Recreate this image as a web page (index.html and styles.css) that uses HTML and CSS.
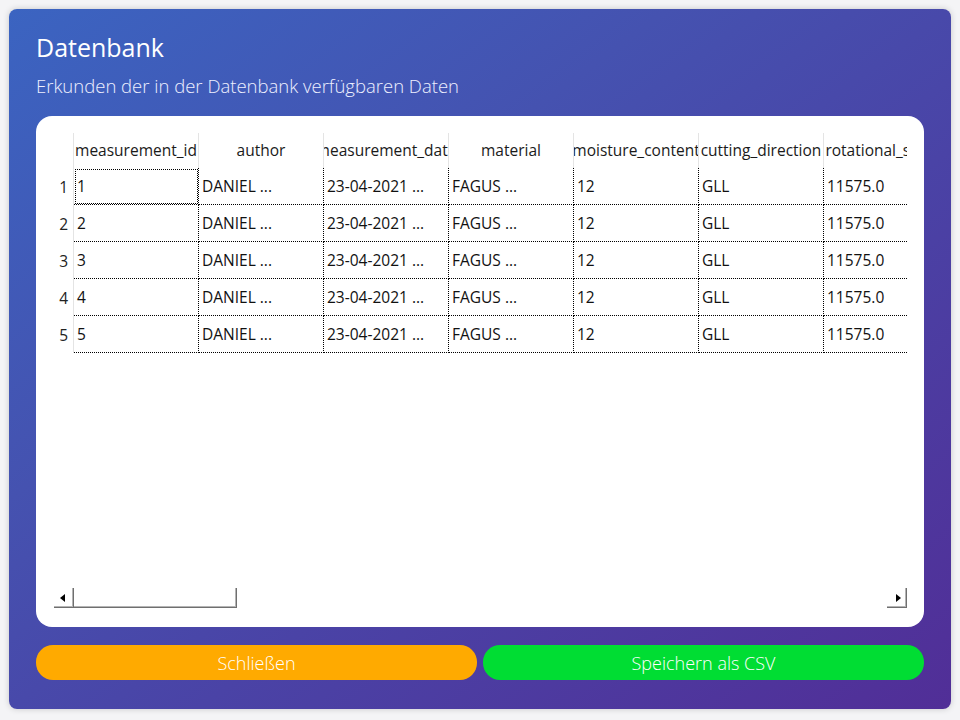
FILE: index.html
```html
<!DOCTYPE html>
<html lang="de">
<head>
<meta charset="utf-8">
<title>Datenbank</title>
<link rel="stylesheet" href="styles.css">
</head>
<body>
<div class="window">
  <h1 class="title">Datenbank</h1>
  <p class="subtitle">Erkunden der in der Datenbank verfügbaren Daten</p>
  <div class="card">
    <div class="viewport">
      <div class="grid">
        <div class="corner"></div>
        <div class="hcell"><span>measurement_id</span></div>
        <div class="hcell"><span>author</span></div>
        <div class="hcell"><span>measurement_date</span></div>
        <div class="hcell"><span>material</span></div>
        <div class="hcell"><span>moisture_content</span></div>
        <div class="hcell"><span>cutting_direction</span></div>
        <div class="hcell"><span>rotational_speed</span></div>
        <div class="hcell"><span>feed_rate</span></div>

        <div class="rnum">1</div>
        <div class="cell focus">1</div>
        <div class="cell">DANIEL ...</div>
        <div class="cell">23-04-2021 ...</div>
        <div class="cell">FAGUS ...</div>
        <div class="cell">12</div>
        <div class="cell">GLL</div>
        <div class="cell">11575.0</div>
        <div class="cell">0.5</div>

        <div class="rnum">2</div>
        <div class="cell">2</div>
        <div class="cell">DANIEL ...</div>
        <div class="cell">23-04-2021 ...</div>
        <div class="cell">FAGUS ...</div>
        <div class="cell">12</div>
        <div class="cell">GLL</div>
        <div class="cell">11575.0</div>
        <div class="cell">0.5</div>

        <div class="rnum">3</div>
        <div class="cell">3</div>
        <div class="cell">DANIEL ...</div>
        <div class="cell">23-04-2021 ...</div>
        <div class="cell">FAGUS ...</div>
        <div class="cell">12</div>
        <div class="cell">GLL</div>
        <div class="cell">11575.0</div>
        <div class="cell">0.5</div>

        <div class="rnum">4</div>
        <div class="cell">4</div>
        <div class="cell">DANIEL ...</div>
        <div class="cell">23-04-2021 ...</div>
        <div class="cell">FAGUS ...</div>
        <div class="cell">12</div>
        <div class="cell">GLL</div>
        <div class="cell">11575.0</div>
        <div class="cell">0.5</div>

        <div class="rnum">5</div>
        <div class="cell">5</div>
        <div class="cell">DANIEL ...</div>
        <div class="cell">23-04-2021 ...</div>
        <div class="cell">FAGUS ...</div>
        <div class="cell">12</div>
        <div class="cell">GLL</div>
        <div class="cell">11575.0</div>
        <div class="cell">0.5</div>
      </div>
    </div>
    <div class="hscroll">
      <div class="sbtn"><span class="arrow left"></span></div>
      <div class="track">
        <div class="thumb"></div>
      </div>
      <div class="sbtn"><span class="arrow right"></span></div>
    </div>
  </div>
  <div class="actions">
    <button class="btn close">Schließen</button>
    <button class="btn save">Speichern als CSV</button>
  </div>
</div>
</body>
</html>
```

FILE: styles.css
```css
* { box-sizing: border-box; }

html, body {
  margin: 0;
  padding: 0;
}

body {
  background: #f4f4f6;
  padding: 9px;
  font-family: "Open Sans", "Noto Sans", sans-serif;
}

.window {
  width: 942px;
  height: 700px;
  border-radius: 8px;
  background: linear-gradient(to bottom right, #3b64c1 0%, #4552b0 35%, #4a43a6 60%, #512e97 100%);
  box-shadow: 0 0 6px rgba(0, 0, 0, 0.18);
  padding: 21px 27px 29px 27px;
  display: flex;
  flex-direction: column;
}

.title {
  margin: 0;
  font-size: 25px;
  font-weight: 400;
  line-height: 34px;
  color: #ffffff;
}

.subtitle {
  margin: 10px 0 0 0;
  font-size: 18.5px;
  font-weight: 300;
  line-height: 24px;
  color: #eef0ff;
}

.card {
  margin-top: 18px;
  height: 511px;
  background: #ffffff;
  border-radius: 16px;
  padding: 17px 17px 19px 18px;
  display: flex;
  flex-direction: column;
}

.viewport {
  flex: 1;
  overflow: hidden;
  width: 853px;
}

.grid {
  display: grid;
  grid-template-columns: 20px repeat(8, 125px);
  grid-template-rows: 35px repeat(5, 37px);
  width: max-content;
  font-size: 15.5px;
  color: #111;
}

.corner {
  border-right: 1px solid #e4e4e4;
}

.hcell {
  display: flex;
  justify-content: center;
  align-items: center;
  overflow: hidden;
  border-right: 1px solid #e4e4e4;
  white-space: nowrap;
  color: #1a1a1a;
  padding-bottom: 2px;
}

.hcell span {
  flex: none;
}

.rnum {
  display: flex;
  align-items: center;
  justify-content: flex-end;
  padding-right: 5px;
  border-right: 1px solid #e4e4e4;
  color: #222;
}

.cell {
  display: flex;
  align-items: center;
  padding-left: 3px;
  white-space: nowrap;
  overflow: hidden;
  border-right: 1px dotted #000;
  border-bottom: 1px dotted #000;
}

.cell.focus {
  outline: 1px dotted #000;
  outline-offset: -2px;
}

.hscroll {
  display: flex;
  height: 20px;
  width: 853px;
}

.sbtn {
  width: 20px;
  height: 20px;
  flex: none;
  display: flex;
  align-items: center;
  justify-content: center;
  background: #ffffff;
  box-shadow: inset -1px -1px 0 #6f6f6f, inset -2px -2px 0 #b4b4b4;
}

.arrow {
  width: 0;
  height: 0;
  border-top: 4px solid transparent;
  border-bottom: 4px solid transparent;
}

.arrow.left {
  border-right: 5px solid #000;
  margin-right: 4px;
}

.arrow.right {
  border-left: 5px solid #000;
  margin-left: 2px;
}

.track {
  flex: 1;
  display: flex;
}

.thumb {
  width: 163px;
  height: 20px;
  box-shadow: inset -1px -1px 0 #6f6f6f, inset -2px -2px 0 #b4b4b4;
}

.actions {
  margin-top: 18px;
  display: flex;
  gap: 6px;
}

.btn {
  flex: 1;
  height: 35px;
  border: none;
  border-radius: 17px;
  font-family: "Open Sans", "Noto Sans", sans-serif;
  font-size: 18px;
  font-weight: 300;
  color: #ffffff;
  padding: 0;
}

.btn.close {
  background: #ffaa00;
}

.btn.save {
  background: #00dd33;
}
```
